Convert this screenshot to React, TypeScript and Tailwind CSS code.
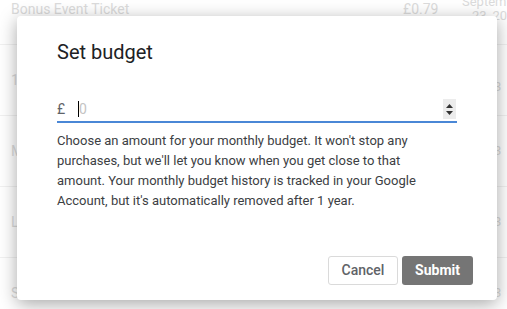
import React from "react";

const rows = [
  { name: "Bonus Event Ticket", price: "£0.79", date: ["September", "23, 2023"] },
  { name: "1", price: "", date: ["24", "2023"] },
  { name: "M", price: "", date: ["", "2023"] },
  { name: "L", price: "", date: ["", "2023"] },
  { name: "S", price: "", date: ["", "2023"] },
];

function BackgroundTable() {
  return (
    <div className="flex flex-col -mt-[26px]">
      {rows.map((r, i) => (
        <div
          key={i}
          className="h-[71px] shrink-0 flex items-center border-b border-[#e8e8e8] text-[14px] text-[#c4c4c4] pl-[11px]"
        >
          <span className="flex-1">{r.name}</span>
          <span className="w-[59px]">{r.price}</span>
          <div className="w-[45px] flex flex-col leading-[14px] text-[13px] whitespace-nowrap overflow-hidden">
            <span>{r.date[0]}</span>
            <span className="pl-[10px]">{r.date[1]}</span>
          </div>
        </div>
      ))}
    </div>
  );
}

export default function App() {
  return (
    <div
      className="relative w-[507px] h-[309px] overflow-hidden bg-white"
      style={{ fontFamily: "Roboto, 'Noto Sans', Arial, sans-serif" }}
    >
      <BackgroundTable />
      <div className="absolute inset-0 bg-white/40" />

      {/* Dialog */}
      <div className="absolute left-[17px] top-[16px] w-[480px] h-[284px] bg-white rounded-[4px] shadow-[0_4px_18px_rgba(0,0,0,0.35)] flex flex-col px-[40px] pt-[24px] pb-[15px]">
        <h2 className="text-[20px] leading-[24px] font-normal text-[#202124]">Set budget</h2>

        <div className="mt-[33px] h-[26px] flex items-center border-b-2 border-[#4a87d6]">
          <span className="text-[14px] text-[#5f6368] w-[21px]">£</span>
          <span className="w-px h-[16px] bg-black" />
          <span className="text-[14px] text-[#c4c4c4] flex-1">0</span>
          <div className="w-[13px] h-[20px] bg-[#ececec] flex flex-col items-center justify-center gap-[3px] mr-[1px]">
            <svg width="7" height="4" viewBox="0 0 7 4">
              <path d="M0 4L3.5 0L7 4Z" fill="#333" />
            </svg>
            <svg width="7" height="4" viewBox="0 0 7 4">
              <path d="M0 0L3.5 4L7 0Z" fill="#333" />
            </svg>
          </div>
        </div>

        <p className="mt-[8px] w-[390px] text-[13px] leading-[20px] text-[#3c4043]">
          Choose an amount for your monthly budget. It won't stop any purchases, but we'll let you
          know when you get close to that amount. Your monthly budget history is tracked in your
          Google Account, but it's automatically removed after 1 year.
        </p>

        <div className="mt-auto flex justify-end gap-[4px] -mr-[16px]">
          <button className="w-[70px] h-[29px] rounded-[3px] border border-[#dadada] bg-white text-[14px] font-medium text-[#5f6368]">
            Cancel
          </button>
          <button className="w-[71px] h-[29px] rounded-[3px] bg-[#757575] text-[14px] font-bold text-white">
            Submit
          </button>
        </div>
      </div>
    </div>
  );
}
